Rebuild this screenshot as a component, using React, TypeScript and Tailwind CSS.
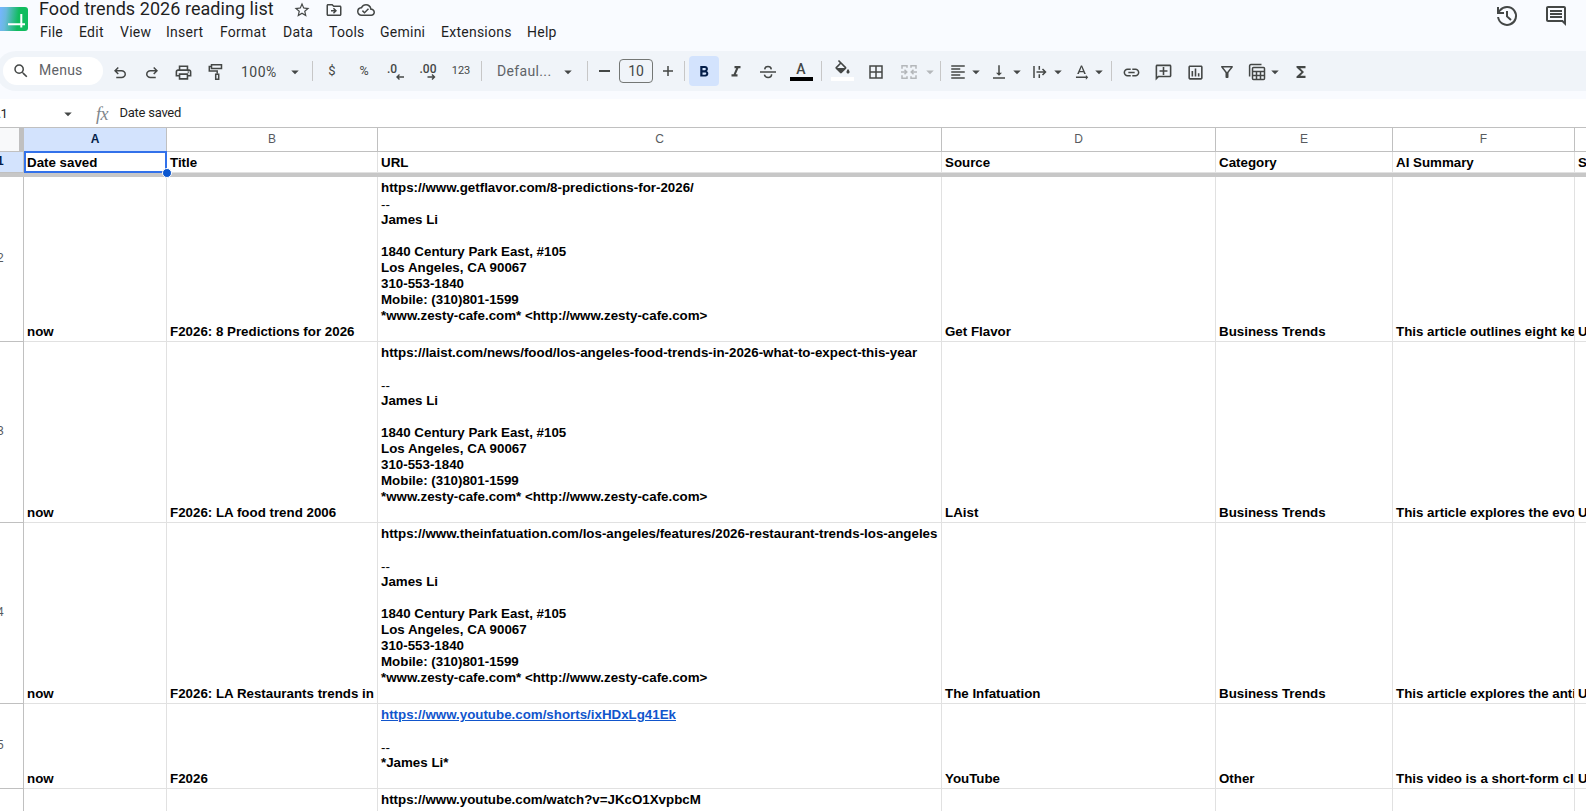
import type { ReactNode } from 'react'
import {
  MdStarBorder,
  MdOutlineDriveFileMove,
  MdOutlineCloudDone,
  MdSearch,
  MdOutlinePrint,
  MdArrowDropDown,
  MdFormatBold,
  MdFormatItalic,
  MdBorderAll,
  MdFormatAlignLeft,
  MdVerticalAlignBottom,
  MdLink,
  MdOutlineAddComment,
  MdOutlineInsertChart,
  MdOutlineFilterAlt,
  MdFunctions,
  MdOutlineComment,
  MdTextRotationNone,
} from 'react-icons/md'
import clsx from 'clsx'

const MENUS = [
  { label: 'File', width: 'w-[39px]' },
  { label: 'Edit', width: 'w-[41px]' },
  { label: 'View', width: 'w-[46px]' },
  { label: 'Insert', width: 'w-[54px]' },
  { label: 'Format', width: 'w-[63px]' },
  { label: 'Data', width: 'w-[46px]' },
  { label: 'Tools', width: 'w-[51px]' },
  { label: 'Gemini', width: 'w-[61px]' },
  { label: 'Extensions', width: 'w-[86px]' },
  { label: 'Help', width: 'w-[40px]' },
]

const COLUMNS = [
  { letter: 'A', width: 'w-[143px]' },
  { letter: 'B', width: 'w-[211px]' },
  { letter: 'C', width: 'w-[564px]' },
  { letter: 'D', width: 'w-[274px]' },
  { letter: 'E', width: 'w-[177px]' },
  { letter: 'F', width: 'w-[182px]' },
  { letter: '', width: 'w-[12px]' },
]

const HEADERS = ['Date saved', 'Title', 'URL', 'Source', 'Category', 'AI Summary', 'S']

const SIGNATURE = [
  '--',
  'James Li',
  '',
  '1840 Century Park East, #105',
  'Los Angeles, CA 90067',
  '310-553-1840',
  'Mobile: (310)801-1599',
  '*www.zesty-cafe.com* <http://www.zesty-cafe.com>',
]

type SheetRow = {
  n: number
  height: string
  date: string
  title: string
  url: string[]
  link?: boolean
  source: string
  category: string
  summary: string
  extra: string
}

const ROWS: SheetRow[] = [
  {
    n: 2,
    height: 'h-[165px]',
    date: 'now',
    title: 'F2026: 8 Predictions for 2026',
    url: ['https://www.getflavor.com/8-predictions-for-2026/', ...SIGNATURE],
    source: 'Get Flavor',
    category: 'Business Trends',
    summary: 'This article outlines eight ke',
    extra: 'U',
  },
  {
    n: 3,
    height: 'h-[181px]',
    date: 'now',
    title: 'F2026: LA food trend 2006',
    url: ['https://laist.com/news/food/los-angeles-food-trends-in-2026-what-to-expect-this-year', '', ...SIGNATURE],
    source: 'LAist',
    category: 'Business Trends',
    summary: 'This article explores the evo',
    extra: 'U',
  },
  {
    n: 4,
    height: 'h-[181px]',
    date: 'now',
    title: 'F2026: LA Restaurants trends in',
    url: ['https://www.theinfatuation.com/los-angeles/features/2026-restaurant-trends-los-angeles', '', ...SIGNATURE],
    source: 'The Infatuation',
    category: 'Business Trends',
    summary: 'This article explores the anti',
    extra: 'U',
  },
  {
    n: 5,
    height: 'h-[85px]',
    date: 'now',
    title: 'F2026',
    url: ['https://www.youtube.com/shorts/ixHDxLg41Ek', '', '--', '*James Li*'],
    link: true,
    source: 'YouTube',
    category: 'Other',
    summary: 'This video is a short-form cl',
    extra: 'U',
  },
]

function Tool({ width = 'w-8', raised, children }: { width?: string; raised?: boolean; children: ReactNode }) {
  return (
    <button className={clsx('flex h-8 shrink-0 items-center justify-center', !raised && 'pt-0.5', width)}>
      {children}
    </button>
  )
}

function Divider({ className }: { className?: string }) {
  return <div className={clsx('h-5 w-px shrink-0 bg-[#c7c7c7]', className)} />
}

function Caret({ className }: { className?: string }) {
  return <MdArrowDropDown className={clsx('mt-px size-[18px] shrink-0', className)} />
}

function SheetsLogo() {
  return (
    <svg viewBox="0 0 28 24" className="mt-[7px] h-6 w-7">
      <defs>
        <linearGradient id="logo" x1="0" x2="1" y1="0.4" y2="0.5">
          <stop offset="0" stopColor="#74b6fb" />
          <stop offset="0.2" stopColor="#6ab9dd" />
          <stop offset="0.65" stopColor="#11bc5f" />
          <stop offset="1" stopColor="#11bc5f" />
        </linearGradient>
      </defs>
      <path d="M0 0h25a3 3 0 0 1 3 3v18a3 3 0 0 1-3 3H0z" fill="url(#logo)" />
      <path d="M8 17.2h17M21.3 7v13.5" stroke="#fff" strokeWidth="2" />
    </svg>
  )
}

function UndoIcon({ className }: { className?: string }) {
  return (
    <svg viewBox="0 0 24 24" className={clsx('size-[18px]', className)} fill="currentColor">
      <path d="M7 19v-2h7.1q1.575 0 2.738-1T18 13.5q0-1.5-1.162-2.5T14.1 10H7.8l2.6 2.6L9 14 4 9l5-5 1.4 1.4L7.8 8h6.3q2.425 0 4.163 1.575T20 13.5t-1.737 3.925T14.1 19z" />
    </svg>
  )
}

function PaintIcon() {
  return (
    <svg viewBox="0 0 18 18" className="size-[18px]" fill="none" stroke="currentColor" strokeWidth="1.5">
      <path d="M4.5 1.8h10v3.6h-10zM4.5 3.5H2.3V8h7.9v2.7" />
      <path d="M8.7 11.2h3v5h-3z" />
    </svg>
  )
}

function DecimalIcon({ digits, more }: { digits: string; more?: boolean }) {
  return (
    <svg viewBox="0 0 20 20" className="size-5">
      <text
        x={more ? 1.5 : 1}
        y="10.5"
        fill="#444746"
        className="font-['Roboto',sans-serif] text-[12px] font-medium"
        textLength={more ? 17 : 10}
      >
        {digits}
      </text>
      {more ? (
        <path d="M9.5 15h6.7M14 12.5l2.5 2.5-2.5 2.5" fill="none" stroke="#444746" strokeWidth="1.4" />
      ) : (
        <path d="M18 15h-6.7M13.5 12.5 11 15l2.5 2.5" fill="none" stroke="#444746" strokeWidth="1.4" />
      )}
    </svg>
  )
}

function StrikeIcon() {
  return (
    <svg viewBox="0 0 18 18" className="size-[18px]" fill="none" stroke="currentColor" strokeWidth="1.5">
      <path d="M1 9h16" />
      <path d="M12.3 6.3C12 4.5 10.8 3.6 9 3.6S5.9 4.5 5.7 6.3M12.6 11.3c0 2-1.5 3.2-3.5 3.2s-3.3-1-3.7-2.8" />
    </svg>
  )
}

function FillIcon() {
  return (
    <svg viewBox="0 0 24 24" className="size-[19px]" fill="currentColor">
      <path d="M16.56 8.94 7.62 0 6.21 1.41l2.38 2.38-5.15 5.15a1.49 1.49 0 0 0 0 2.12l5.5 5.5c.29.29.68.44 1.06.44s.77-.15 1.06-.44l5.5-5.5c.59-.58.59-1.53 0-2.12M5.21 10 10 5.21 14.79 10zM19 11.5s-2 2.17-2 3.5c0 1.1.9 2 2 2s2-.9 2-2c0-1.33-2-3.5-2-3.5" />
    </svg>
  )
}

function MergeIcon() {
  return (
    <svg viewBox="0 0 18 18" className="size-[18px]" fill="none" stroke="#b4b7ba" strokeWidth="1.5">
      <path d="M7 4.7v-2H2v3M11 4.7v-2h5v3M7 13.3v2H2v-3M11 13.3v2h5v-3" />
      <path d="M1 9h5.5M4.5 6.7 6.8 9l-2.3 2.3M17 9h-5.5M13.5 6.7 11.2 9l2.3 2.3" />
    </svg>
  )
}

function WrapIcon() {
  return (
    <svg viewBox="0 0 18 18" className="size-[18px]" fill="none" stroke="currentColor" strokeWidth="1.5">
      <path d="M3 3v12M8.3 3v3.8M8.3 11.2V15M5.5 9H14M11.5 6 14.5 9l-3 3" />
    </svg>
  )
}

function TableIcon() {
  return (
    <svg viewBox="0 0 18 18" className="size-[18px]" fill="none" stroke="currentColor" strokeWidth="1.5">
      <path d="M1.6 13.5V3q0-1.4 1.4-1.4h10.5" />
      <rect x="4.5" y="4.5" width="12" height="12" rx="1" />
      <path d="M4.5 8.5h12M4.500 12.5h12M8.5 8.5v8M12.5 8.5v8" />
    </svg>
  )
}

function HistoryIcon() {
  return (
    <svg viewBox="0 0 24 24" className="size-6" fill="none" stroke="#444746" strokeWidth="2">
      <path d="M3.1 13A9 9 0 1 0 5 6.3L3.5 8.5" />
      <path d="M3 3v6h6" />
      <path d="M12 7v5.4l4 3.6" />
    </svg>
  )
}

function TitleBar() {
  return (
    <header className="flex h-[51px]">
      <SheetsLogo />
      <div className="ml-[11px] flex-1">
        <div className="flex h-5 items-center">
          <h1 className="-mt-0.5 w-[254px] text-[18px] leading-5 tracking-[0.05px] whitespace-nowrap text-[#1f1f1f]">
            Food trends 2026 reading list
          </h1>
          <div className="flex items-center gap-[14px] text-[#444746]">
            <MdStarBorder className="size-[18px]" />
            <MdOutlineDriveFileMove className="size-[18px]" />
            <MdOutlineCloudDone className="size-[18px]" />
          </div>
        </div>
        <nav className="mt-[2px] flex h-5 items-center text-[14px] tracking-[0.25px] text-[#1f1f1f]">
          {MENUS.map((m) => (
            <button key={m.label} className={clsx('pl-px text-left', m.width)}>
              {m.label}
            </button>
          ))}
        </nav>
      </div>
      <div className="mt-1 mr-[18px] flex gap-[25px] text-[#444746]">
        <HistoryIcon />
        <MdOutlineComment className="size-6" />
      </div>
    </header>
  )
}

function Toolbar() {
  return (
    <div className="-ml-1 flex h-10 items-center rounded-l-[24px] bg-[#f0f4f9] pl-[7px] text-[#444746]">
      <div className="mb-px flex h-7 w-[100px] shrink-0 items-center rounded-full bg-white pl-[9px]">
        <MdSearch className="size-[18px]" />
        <span className="ml-[9px] text-[14px] tracking-[0.25px] text-[#5f6368]">Menus</span>
      </div>
      <Tool width="w-[34px]">
        <UndoIcon className="mt-0.5" />
      </Tool>
      <Tool width="w-[30px]">
        <UndoIcon className="mt-0.5 -scale-x-100" />
      </Tool>
      <Tool width="w-[33px]">
        <MdOutlinePrint className="size-[19px]" />
      </Tool>
      <Tool width="w-[31px]">
        <PaintIcon />
      </Tool>
      <div className="flex w-[81px] shrink-0 items-center pl-[10px]">
        <span className="w-[45px] pt-0.5 text-[14px] tracking-[0.5px]">100%</span>
        <Caret />
      </div>
      <Divider />
      <Tool width="ml-[3px] w-8" raised>
        <span className="text-[13px]">$</span>
      </Tool>
      <Tool raised>
        <span className="text-[12.5px]">%</span>
      </Tool>
      <Tool>
        <DecimalIcon digits=".0" />
      </Tool>
      <Tool>
        <DecimalIcon digits=".00" more />
      </Tool>
      <Tool width="w-[34px]" raised>
        <span className="text-[11px]">123</span>
      </Tool>
      <Divider className="ml-[3px]" />
      <div className="flex w-[105px] shrink-0 items-center pl-[15px]">
        <span className="w-[62px] text-[14px] tracking-[0.35px] text-[#5f6368]">Defaul...</span>
        <Caret />
      </div>
      <Divider />
      <Tool width="w-[31px] pl-px" raised>
        <div className="h-[1.5px] w-[11px] bg-[#444746]" />
      </Tool>
      <div className="flex h-6 w-[34px] shrink-0 items-center justify-center rounded border border-[#747775] text-[14px]">
        10
      </div>
      <Tool width="w-[30px]" raised>
        <svg viewBox="0 0 12 12" className="size-3">
          <path d="M1 6h10M6 1v10" stroke="#444746" strokeWidth="1.5" />
        </svg>
      </Tool>
      <Divider className="ml-px" />
      <div className="ml-1 flex size-[30px] shrink-0 items-center justify-center rounded bg-[#d3e3fd] pt-px text-[#041e49]">
        <MdFormatBold className="size-[18px]" />
      </div>
      <Tool width="ml-px w-8">
        <MdFormatItalic className="size-[18px]" />
      </Tool>
      <Tool>
        <StrikeIcon />
      </Tool>
      <Tool width="w-[34px]" raised>
        <div className="flex flex-col items-center">
          <span className="h-4 text-[14px] leading-4 font-medium">A</span>
          <div className="h-1 w-[23px] bg-black" />
        </div>
      </Tool>
      <Divider className="ml-[3px]" />
      <Tool width="ml-1 w-8" raised>
        <div className="flex flex-col items-center">
          <div className="-mt-px h-[17px]">
            <FillIcon />
          </div>
          <div className="h-1 w-[23px] bg-white" />
        </div>
      </Tool>
      <Tool width="ml-[2px] w-8">
        <MdBorderAll className="size-[18px]" />
      </Tool>
      <Tool width="ml-px w-8">
        <MergeIcon />
      </Tool>
      <Caret className="-ml-1 text-[#b4b7ba]" />
      <Divider className="ml-px" />
      <Tool width="ml-px w-8">
        <MdFormatAlignLeft className="size-[18px]" />
      </Tool>
      <Caret className="-ml-[7px]" />
      <Tool width="-ml-[2px] w-8">
        <MdVerticalAlignBottom className="size-[18px]" />
      </Tool>
      <Caret className="-ml-[7px]" />
      <Tool width="-ml-[2px] w-8">
        <WrapIcon />
      </Tool>
      <Caret className="-ml-[7px]" />
      <Tool width="-ml-[2px] w-8">
        <MdTextRotationNone className="size-[19px]" />
      </Tool>
      <Caret className="-ml-[7px]" />
      <Divider className="ml-[3px]" />
      <Tool width="ml-[3px] w-8">
        <MdLink className="size-[19px]" />
      </Tool>
      <Tool>
        <MdOutlineAddComment className="size-[19px] -scale-x-100" />
      </Tool>
      <Tool>
        <MdOutlineInsertChart className="size-[19px]" />
      </Tool>
      <Tool>
        <MdOutlineFilterAlt className="size-[18px]" />
      </Tool>
      <Tool width="-ml-[2px] w-8">
        <TableIcon />
      </Tool>
      <Caret className="-ml-[7px]" />
      <Tool width="w-[34px]">
        <MdFunctions className="size-[18px]" />
      </Tool>
    </div>
  )
}

function FormulaBar() {
  return (
    <div className="mt-2 flex h-7 items-center bg-white pt-px text-[13px] text-[#1f1f1f]">
      <span className="-ml-[8px] w-[67px]">A1</span>
      <Caret className="text-[#444746]" />
      <span className="ml-[19px] w-[23.5px] font-['Liberation_Serif',serif] text-[18px] leading-4 tracking-[-0.5px] text-[#80868b] italic">
        fx
      </span>
      <span className="-mt-0.5 tracking-[-0.25px]">Date saved</span>
    </div>
  )
}

function RowNumber({ children, active }: { children?: ReactNode; active?: boolean }) {
  return (
    <div
      className={clsx(
        'flex w-6 shrink-0 items-center border-r border-b border-[#c0c0c0] pb-0.5',
        active ? 'bg-[#d3e3fd] font-bold text-[#041e49]' : 'font-normal text-[#575b5f]',
      )}
    >
      <span className="-ml-[3px] text-[12px]">{children}</span>
    </div>
  )
}

function Cell({ width, children }: { width: string; children: ReactNode }) {
  return (
    <div
      className={clsx(
        'flex shrink-0 flex-col justify-end overflow-hidden border-r border-b border-[#e1e1e1] pt-[3px] pb-px pl-[3px] whitespace-nowrap',
        width,
      )}
    >
      {children}
    </div>
  )
}

function Sheet() {
  return (
    <main className="border-t border-[#c0c0c0] bg-white font-['Liberation_Sans',Arial,sans-serif]">
      {/* Column letters */}
      <div className="flex h-6 text-[12px] text-[#575b5f]">
        <div className="w-6 shrink-0 border-r-[5px] border-b border-[#c0c0c0] bg-[#f8f9fa]" />
        {COLUMNS.map((c, i) => (
          <div
            key={i}
            className={clsx(
              'flex shrink-0 items-center justify-center border-r border-b border-[#c0c0c0] pb-px',
              c.width,
              i === 0 && 'bg-[#d3e3fd] font-bold text-[#041e49]',
            )}
          >
            {c.letter}
          </div>
        ))}
      </div>

      {/* Frozen header row */}
      <div className="relative flex h-[21px] text-[13.333px] leading-4 font-bold text-black">
        <RowNumber active>1</RowNumber>
        {HEADERS.map((h, i) => (
          <Cell key={h} width={COLUMNS[i].width}>
            {h}
          </Cell>
        ))}
        <div className="absolute -top-px left-6 h-[22px] w-[143px] border-2 border-[#3271ea]" />
        <div className="absolute top-[16px] left-[162px] size-[10px] rounded-full border border-white bg-[#0b57d0]" />
      </div>
      <div className="h-1 bg-[#c7c7c7]" />

      {ROWS.map((row) => (
        <div key={row.n} className={clsx('flex text-[13.333px] leading-4 font-bold text-black', row.height)}>
          <RowNumber>{row.n}</RowNumber>
          <Cell width={COLUMNS[0].width}>{row.date}</Cell>
          <Cell width={COLUMNS[1].width}>{row.title}</Cell>
          <Cell width={COLUMNS[2].width}>
            <div className="flex-1">
              {row.url.map((line, i) => (
                <div
                  key={i}
                  className={clsx(
                    'h-4',
                    line === '--' && 'pt-px font-normal',
                    row.link && i === 0 && 'text-[#1155cc] underline',
                  )}
                >
                  {line}
                </div>
              ))}
            </div>
          </Cell>
          <Cell width={COLUMNS[3].width}>{row.source}</Cell>
          <Cell width={COLUMNS[4].width}>{row.category}</Cell>
          <Cell width={COLUMNS[5].width}>{row.summary}</Cell>
          <Cell width={COLUMNS[6].width}>{row.extra}</Cell>
        </div>
      ))}

      {/* Row 6 runs past the bottom of the window */}
      <div className="flex h-[85px] text-[13.333px] leading-4 font-bold text-black">
        <RowNumber />
        {COLUMNS.map((c, i) => (
          <Cell key={i} width={c.width}>
            {i === 2 && <div className="flex-1">https://www.youtube.com/watch?v=JKcO1XvpbcM</div>}
          </Cell>
        ))}
      </div>
    </main>
  )
}

export default function App() {
  return (
    <div className="h-[811px] w-[1586px] overflow-hidden bg-[#f9fbff] font-['Roboto',sans-serif]">
      <TitleBar />
      <Toolbar />
      <FormulaBar />
      <Sheet />
    </div>
  )
}
